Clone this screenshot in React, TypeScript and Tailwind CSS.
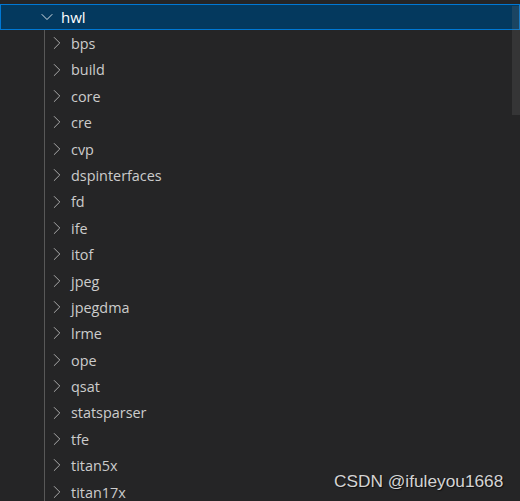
import { ChevronDown, ChevronRight } from 'lucide-react';

const folders = [
  'bps',
  'build',
  'core',
  'cre',
  'cvp',
  'dspinterfaces',
  'fd',
  'ife',
  'itof',
  'jpeg',
  'jpegdma',
  'lrme',
  'ope',
  'qsat',
  'statsparser',
  'tfe',
  'titan5x',
  'titan17x',
];

export default function App() {
  return (
    <div
      className="relative h-[501px] w-[520px] overflow-hidden bg-[#252526] pt-1 text-[14.4px] text-[#cccccc]"
      style={{ fontFamily: '"Open Sans", "Noto Sans", sans-serif' }}
    >
      {/* selected folder row */}
      <div className="flex h-[26px] items-center border border-[#0078d4] bg-[#04395e] pl-[36px] text-white">
        <ChevronDown className="h-[20px] w-[20px] shrink-0" strokeWidth={1} />
        <span className="ml-[4px] pt-[1px] text-[15px] leading-none">hwl</span>
      </div>

      {/* children with indent guide */}
      <div className="relative ml-[44px] border-l border-[#585858]">
        {folders.map((name) => (
          <div key={name} className="flex h-[26.4px] items-center pl-[1px]">
            <ChevronRight className="h-[22px] w-[22px] shrink-0 text-[#c5c5c5]" strokeWidth={0.9} />
            <span className="ml-[3px] pt-[2px] leading-none">{name}</span>
          </div>
        ))}
      </div>

      {/* scrollbar thumb */}
      <div className="absolute right-0 top-[6px] h-[109px] w-[8px] bg-[rgba(121,121,121,0.2)]" />

      {/* watermark */}
      <div
        className="absolute left-[334px] top-[469px] text-[17.3px] text-[#d4d4d4] [text-shadow:1px_1px_1px_rgba(0,0,0,0.6)]"
        style={{ fontFamily: '"Liberation Sans", Arial, sans-serif' }}
      >
        CSDN @ifuleyou1668
      </div>
    </div>
  );
}
